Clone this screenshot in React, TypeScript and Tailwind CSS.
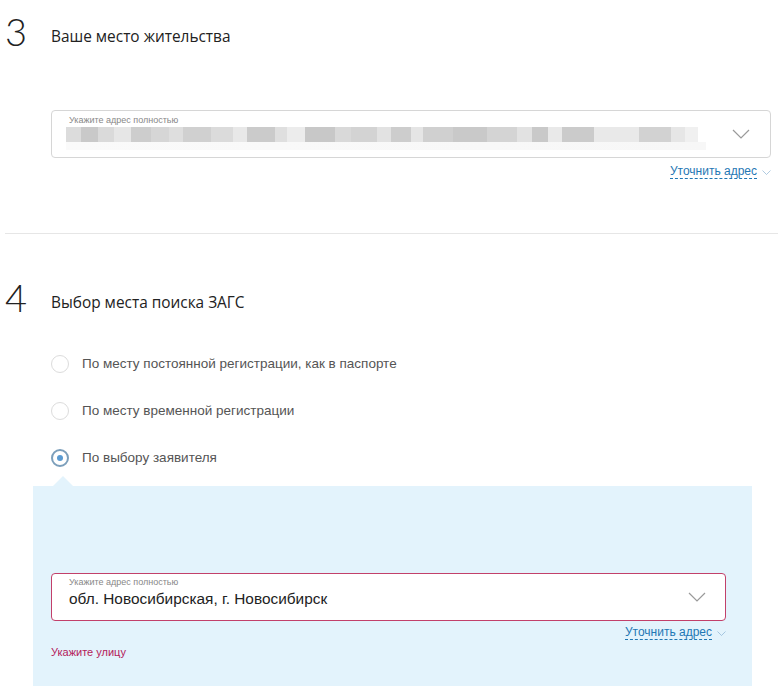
const BLUR: [number, string][] = [
  [15, '#dcdcdc'], [17, '#c9c9c9'], [16, '#dadada'], [17, '#e6e6e6'], [20, '#cdcdcd'], [18, '#d6d6d6'],
  [14, '#dedede'], [28, '#d0d0d0'], [22, '#dbdbdb'], [14, '#e8e8e8'], [28, '#cbcbcb'], [12, '#dfdfdf'],
  [18, '#ececec'], [30, '#c8c8c8'], [16, '#d9d9d9'], [26, '#d3d3d3'], [14, '#e2e2e2'], [20, '#cdcdcd'],
  [12, '#e5e5e5'], [30, '#d0d0d0'], [34, '#c9c9c9'], [30, '#d4d4d4'], [15, '#e2e2e2'], [16, '#c9c9c9'],
  [14, '#e9e9e9'], [32, '#cbcbcb'], [45, '#e9e9e9'], [32, '#d2d2d2'], [14, '#e6e6e6'], [13, '#f0f0f0'],
];

function Chevron({ className }: { className: string }) {
  return (
    <svg className={className} viewBox="0 0 18 10" fill="none">
      <path d="M1 1l8 8 8-8" stroke="currentColor" strokeWidth="1.2" />
    </svg>
  );
}

function Refine() {
  return (
    <div className="flex items-center justify-end gap-[5px] font-['Liberation_Sans',Arial,sans-serif] text-[12px] text-[#1f77b4]">
      <span className="border-b border-dashed border-[#1f77b4] leading-[13px]">Уточнить адрес</span>
      <Chevron className="w-[9px] h-[5px] text-[#7aa7cc]" />
    </div>
  );
}

function Heading({ num, title }: { num: string; title: string }) {
  return (
    <div className="flex items-start">
      <div className="w-[51px] pl-[5px] font-['Lato',sans-serif] font-light text-[38px] leading-[38px] text-[#222]">
        {num}
      </div>
      <div className="pt-[15px] font-['Open_Sans',sans-serif] text-[15.4px] leading-[20px] text-[#222]">{title}</div>
    </div>
  );
}

function Radio({ label, checked }: { label: string; checked?: boolean }) {
  return (
    <div className="flex items-center gap-[13px] h-[20px]">
      <div
        className={`w-[18px] h-[18px] rounded-full border flex items-center justify-center bg-white ${
          checked ? 'border-[#7c9fbb] border-2' : 'border-[#dcdcdc]'
        }`}
      >
        {checked && <div className="w-[6px] h-[6px] rounded-full bg-[#5b9bd2]" />}
      </div>
      <span className="font-['Liberation_Sans',Arial,sans-serif] text-[13.5px] text-[#555]">{label}</span>
    </div>
  );
}

export default function App() {
  return (
    <div className="w-[778px] h-[686px] bg-white overflow-hidden">
      <section className="pt-[12px] pb-[54px]">
        <Heading num="3" title="Ваше место жительства" />
        <div className="ml-[51px] mr-[7px] mt-[60px]">
          <div className="h-[48px] rounded-[4px] border border-[#d6d6d6] bg-white relative pl-[14px] pr-[20px] flex items-center">
            <div className="absolute left-[17px] top-[3px] font-['Liberation_Sans',Arial,sans-serif] text-[9px] text-[#888]">
              Укажите адрес полностью
            </div>
            <div className="flex-1 mt-[8px]">
              <div className="flex h-[15px] w-[640px]">
                {BLUR.map(([w, c], i) => (
                  <div key={i} style={{ width: w, background: c }} />
                ))}
              </div>
              <div className="h-[8px] w-[640px] bg-gradient-to-r from-[#fafafa] to-[#f7f7f7]" />
            </div>
            <Chevron className="w-[18px] h-[10px] text-[#9a9a9a]" />
          </div>
          <div className="mt-[7px]">
            <Refine />
          </div>
        </div>
      </section>

      <div className="ml-[5px] h-px bg-[#e6e6e6]" />

      <section className="pt-[44px]">
        <Heading num="4" title="Выбор места поиска ЗАГС" />
        <div className="ml-[51px] mt-[38px] flex flex-col gap-[27px]">
          <Radio label="По месту постоянной регистрации, как в паспорте" />
          <Radio label="По месту временной регистрации" />
          <Radio label="По выбору заявителя" checked />
        </div>
        <div className="relative ml-[33px] w-[719px] mt-[18px] h-[210px] bg-[#e3f3fc] px-[18px] pt-[87px]">
          <div className="absolute left-[20px] -top-[10px] w-0 h-0 border-l-[10px] border-r-[10px] border-b-[10px] border-l-transparent border-r-transparent border-b-[#e3f3fc]" />
          <div className="w-[675px]">
            <div className="h-[48px] rounded-[4px] border border-[#c2406a] bg-white relative pl-[17px] pr-[19px] flex items-center">
              <div className="absolute left-[17px] top-[2px] font-['Liberation_Sans',Arial,sans-serif] text-[9px] text-[#888]">
                Укажите адрес полностью
              </div>
              <div className="flex-1 pt-[3px] font-['Liberation_Sans',Arial,sans-serif] text-[15.4px] text-[#222]">
                обл. Новосибирская, г. Новосибирск
              </div>
              <Chevron className="w-[18px] h-[10px] text-[#9a9a9a]" />
            </div>
            <div className="mt-[5px]">
              <Refine />
            </div>
          </div>
          <div className="mt-[4px] font-['Liberation_Sans',Arial,sans-serif] text-[11px] text-[#b3205a]">Укажите улицу</div>
        </div>
      </section>
    </div>
  );
}
